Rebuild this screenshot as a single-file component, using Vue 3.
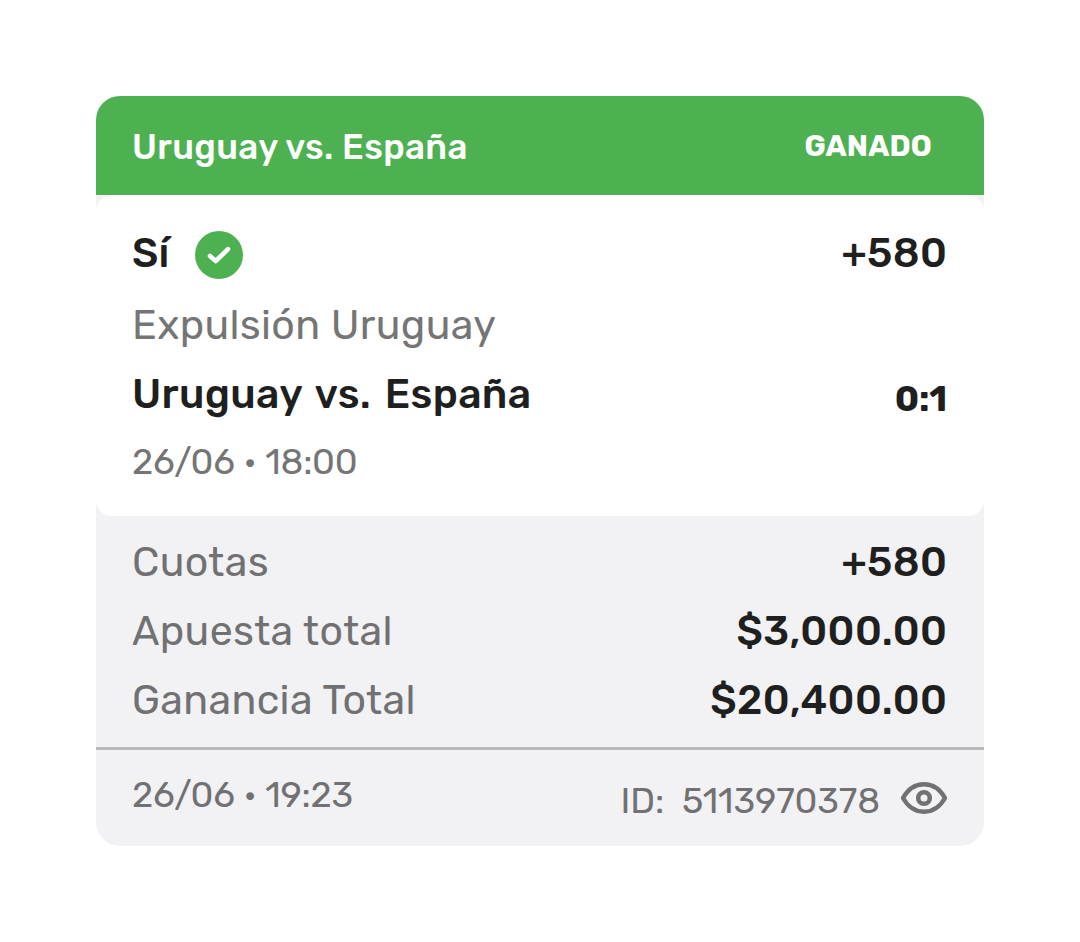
<!-- src/components/BetCard.vue -->
<template>
  <div class="page">
    <div class="bet-card">
      <header class="card-header">
        <span class="event-title">{{ bet.event }}</span>
        <span class="status">{{ bet.status }}</span>
      </header>

      <section class="selection">
        <div class="row pick-row">
          <div class="pick">
            <span class="strong pick-name">{{ bet.pick }}</span>
            <svg class="check" viewBox="0 0 48 48">
              <circle cx="24" cy="24" r="24" fill="#4eb151" />
              <path d="M15 25 20.700 30 33 18.200" fill="none" stroke="#fff" stroke-width="4.600" stroke-linecap="round" stroke-linejoin="round" />
            </svg>
          </div>
          <span class="strong value">{{ bet.odds }}</span>
        </div>
        <div class="row muted market">{{ bet.market }}</div>
        <div class="row event-row">
          <span class="strong event-name">{{ bet.event }}</span>
          <span class="score">{{ bet.score }}</span>
        </div>
        <div class="date">{{ bet.eventDate }}</div>
      </section>

      <section class="totals">
        <div v-for="item in totals" :key="item.label" class="row">
          <span class="muted">{{ item.label }}</span>
          <span class="strong value">{{ item.value }}</span>
        </div>
      </section>

      <footer class="card-footer">
        <span class="date placed">{{ bet.placedDate }}</span>
        <div class="bet-id">
          <span class="id-label">ID:</span>
          <span class="id-number">{{ bet.id }}</span>
          <svg class="eye" viewBox="0 0 48 34" fill="none" stroke="#717173">
            <path d="M3 17C8 8.200 15.500 3.300 24 3.300S40 8.200 45 17C40 25.800 32.500 30.700 24 30.700S8 25.800 3 17Z" stroke-width="4.400" stroke-linejoin="round" />
            <circle cx="24" cy="17" r="5.800" stroke-width="4.600" />
          </svg>
        </div>
      </footer>
    </div>
  </div>
</template>

<script setup>
const bet = {
  event: 'Uruguay vs. España',
  status: 'GANADO',
  pick: 'Sí',
  odds: '+580',
  market: 'Expulsión Uruguay',
  score: '0:1',
  eventDate: '26/06 • 18:00',
  placedDate: '26/06 • 19:23',
  id: '5113970378'
};

const totals = [
  { label: 'Cuotas', value: '+580' },
  { label: 'Apuesta total', value: '$3,000.00' },
  { label: 'Ganancia Total', value: '$20,400.00' }
];
</script>

<style>
body {
  margin: 0;
  background: #fff;
}
</style>

<style scoped>
.page {
  box-sizing: border-box;
  width: 1080px;
  height: 942px;
  padding: 96px;
  font-family: Rubik, Roboto, sans-serif;
  white-space: nowrap;
}
.bet-card {
  height: 750px;
  border-radius: 24px;
  background: #f2f2f4;
  overflow: hidden;
}
.card-header {
  box-sizing: border-box;
  display: flex;
  justify-content: space-between;
  height: 99px;
  padding: 30px 52px 0 36px;
  background: #4eb151;
  color: #fff;
}
.event-title {
  font-size: 35px;
  line-height: 42px;
  font-weight: 500;
  letter-spacing: 0.35px;
}
.status {
  padding-top: 2px;
  font-size: 29.5px;
  line-height: 36px;
  font-weight: 700;
  letter-spacing: 0.2px;
}
.selection {
  box-sizing: border-box;
  height: 321px;
  padding: 34px 36px 0;
  border-radius: 16px;
  background: #fff;
}
.row {
  display: flex;
  justify-content: space-between;
  height: 48px;
  font-size: 41px;
  line-height: 48px;
}
.pick-row {
  margin-bottom: 24px;
}
.pick {
  display: flex;
}
.check {
  width: 48px;
  height: 48px;
  margin: 2px 0 0 25px;
}
.market {
  margin-bottom: 21px;
}
.event-row {
  margin-bottom: 23px;
}
.strong {
  color: #1f1f1f;
  font-weight: 500;
  letter-spacing: 0.3px;
}
.value {
  margin-right: 0.6px;
  letter-spacing: 0.4px;
}
.event-name {
  word-spacing: 4px;
}
.muted {
  color: #757575;
  letter-spacing: 0.35px;
}
.score {
  margin-right: 1px;
  padding-top: 8px;
  color: #1f1f1f;
  font-size: 36px;
  line-height: 42px;
  font-weight: 700;
  letter-spacing: -0.2px;
}
.date {
  color: #757575;
  font-size: 36px;
  line-height: 42px;
  letter-spacing: -0.25px;
}
.totals {
  box-sizing: border-box;
  display: flex;
  flex-direction: column;
  gap: 21px;
  height: 231px;
  padding: 22px 36px 0;
}
.totals .muted,
.placed {
  color: #717173;
}
.card-footer {
  box-sizing: border-box;
  display: flex;
  justify-content: space-between;
  height: 99px;
  padding: 24px 36px 0;
  border-top: 3px solid #b9b9bb;
}
.bet-id {
  display: flex;
  padding-top: 6px;
  color: #717173;
  font-size: 36px;
  line-height: 42px;
  letter-spacing: -0.1px;
}
.id-label {
  margin-right: 18px;
}
.eye {
  width: 48px;
  height: 34px;
  margin: 1px 0 0 20px;
}
</style>
